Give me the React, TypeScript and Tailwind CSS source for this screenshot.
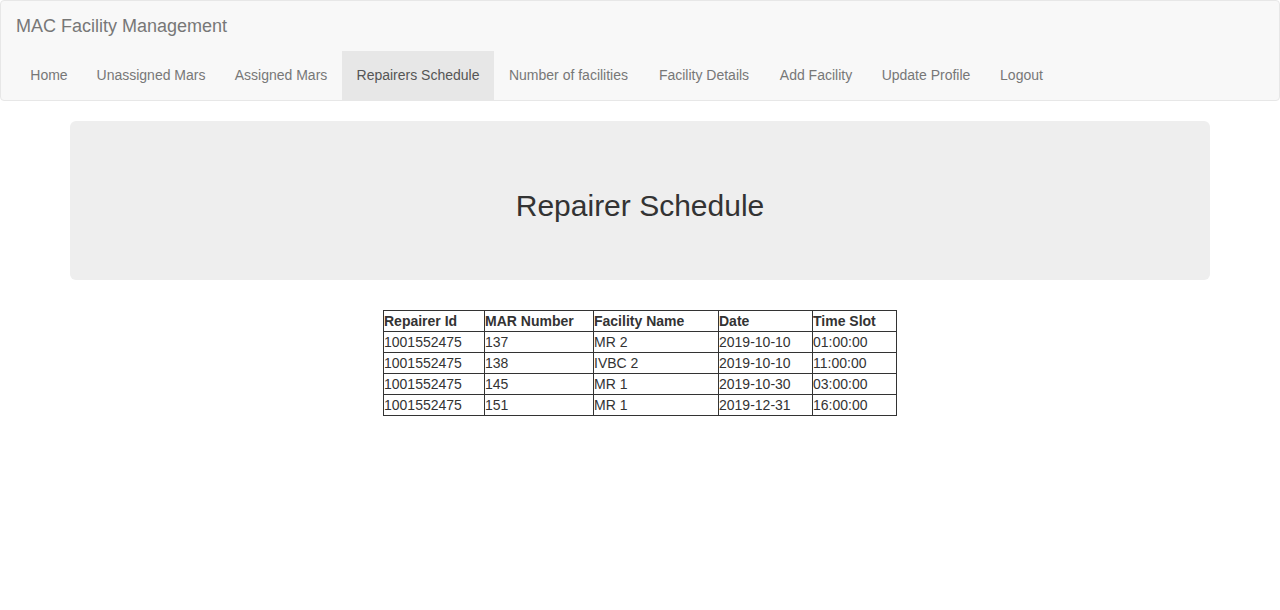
import React from 'react';

// widths taken from the reference so the tabs line up
const links: [string, string][] = [
  ['Home', 'w-[66px]'],
  ['Unassigned Mars', 'w-[138px]'],
  ['Assigned Mars', 'w-[122px]'],
  ['Repairers Schedule', 'w-[152px]'],
  ['Number of facilities', 'w-[149px]'],
  ['Facility Details', 'w-[122px]'],
  ['Add Facility', 'w-[102px]'],
  ['Update Profile', 'w-[118px]'],
  ['Logout', 'w-[73px]'],
];

const rows = [
  ['1001552475', '137', 'MR 2', '2019-10-10', '01:00:00'],
  ['1001552475', '138', 'IVBC 2', '2019-10-10', '11:00:00'],
  ['1001552475', '145', 'MR 1', '2019-10-30', '03:00:00'],
  ['1001552475', '151', 'MR 1', '2019-12-31', '16:00:00'],
];

const headers = ['Repairer Id', 'MAR Number', 'Facility Name', 'Date', 'Time Slot'];
const widths = ['w-[101px]', 'w-[109px]', 'w-[125px]', 'w-[94px]', 'w-[84px]'];

export default function App() {
  return (
    <div className="min-h-[610px] bg-white text-[14px] leading-[20px] text-[#333] font-['Liberation_Sans',Arial,sans-serif]">
      <nav className="mb-5 rounded-[4px] border border-[#e7e7e7] bg-[#f8f8f8]">
        <div className="h-[50px] px-[15px] py-[15px] text-[18px] leading-[20px] text-[#777]">
          MAC Facility Management
        </div>
        <ul className="flex pl-[15px]">
          {links.map(([l, w]) => (
            <li key={l}>
              <a
                className={
                  l === 'Repairers Schedule'
                    ? `${w} block h-[49px] whitespace-nowrap bg-[#e7e7e7] pt-[14px] text-center text-[#555]`
                    : `${w} block h-[49px] whitespace-nowrap pt-[14px] text-center text-[#777]`
                }
              >
                {l}
              </a>
            </li>
          ))}
        </ul>
      </nav>

      <div className="mx-auto w-[1170px] px-[15px]">
        <div className="mb-[30px] rounded-[6px] bg-[#eee] py-12 text-center">
          <h2 className="mt-5 mb-[10px] text-[30px] leading-[33px] font-normal text-[#333]">
            Repairer Schedule
          </h2>
        </div>

        <table className="mx-auto border-collapse border border-[#333] text-[14px] leading-[20px]">
          <thead>
            <tr>
              {headers.map((h, i) => (
                <th key={h} className={`${widths[i]} border border-[#333] p-0 text-left font-bold`}>
                  {h}
                </th>
              ))}
            </tr>
          </thead>
          <tbody>
            {rows.map((r, ri) => (
              <tr key={ri}>
                {r.map((c, ci) => (
                  <td key={ci} className="border border-[#333] p-0">
                    {c}
                  </td>
                ))}
              </tr>
            ))}
          </tbody>
        </table>
      </div>
    </div>
  );
}
